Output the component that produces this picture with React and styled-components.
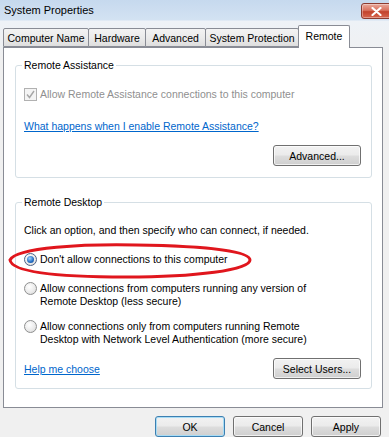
import React from 'react';
import styled, { createGlobalStyle } from 'styled-components';

const GlobalStyle = createGlobalStyle`
  html, body {
    margin: 0;
    padding: 0;
    background: #eef1f5;
  }
  body {
    font-family: "Liberation Sans", Arial, sans-serif;
    font-size: 10.5px;
    color: #000;
  }
`;

const Window = styled.div`
  position: relative;
  width: 389px;
  height: 437px;
  overflow: hidden;
  background: linear-gradient(180deg, #c6d9ee 0px, #d3e2f2 20px, #eef2f7 21px, #f0f0f0 60px);
`;

const TitleBar = styled.div`
  height: 21px;
  display: flex;
  align-items: flex-start;
  justify-content: space-between;
  padding-left: 4px;
  box-sizing: border-box;
`;

const Title = styled.span`
  font-size: 11px;
  line-height: 21px;
  color: #000;
`;

const CloseButton = styled.div`
  margin-top: 3px;
  margin-right: -6px;
  width: 32px;
  height: 14px;
  border: 1px solid #8c3b30;
  border-radius: 3px;
  background: linear-gradient(180deg, #e9a99c 0%, #d9725f 45%, #c2422c 55%, #d7664f 100%);
  display: flex;
  align-items: center;
  justify-content: center;
  box-shadow: inset 0 0 0 1px rgba(255, 255, 255, 0.35);
  svg {
    margin-left: -4px;
  }
`;

const Body = styled.div`
  padding: 0 6px 0 3px;
`;

const TabStrip = styled.div`
  height: 26px;
  display: flex;
  align-items: flex-end;
  position: relative;
  z-index: 1;
`;

const Tab = styled.div`
  box-sizing: border-box;
  width: ${p => p.$w}px;
  height: ${p => (p.$active ? 23 : 19)}px;
  margin-left: ${p => (p.$first ? 0 : -1)}px;
  margin-bottom: ${p => (p.$active ? -1 : 0)}px;
  border: 1px solid #898c95;
  border-bottom: ${p => (p.$active ? 'none' : '1px solid #898c95')};
  border-radius: 2px 2px 0 0;
  background: ${p => (p.$active ? '#fff' : 'linear-gradient(180deg, #f3f3f3 0%, #ebebeb 50%, #dedede 100%)')};
  display: flex;
  justify-content: center;
  padding-top: ${p => (p.$active ? 4 : 3)}px;
  font-size: 10.5px;
  line-height: 12px;
  white-space: nowrap;
`;

const Panel = styled.div`
  box-sizing: border-box;
  height: 361px;
  border: 1px solid #898c95;
  background: #fff;
  padding: 0 10px 0 11px;
  display: flex;
  flex-direction: column;
`;

const GroupBox = styled.fieldset`
  margin: ${p => p.$top}px 0 0 0;
  padding: 0 ${p => p.$padRight}px ${p => p.$padBottom}px 8px;
  border: 1px solid #d5dfe5;
  border-radius: 3px;
  min-width: 0;
  display: flex;
  flex-direction: column;
`;

const Legend = styled.legend`
  padding: 0 2px;
  margin-left: -2px;
  line-height: 12px;
  font-size: 10.5px;
  color: #000;
`;

const CheckRow = styled.div`
  margin-top: 16px;
  display: flex;
  align-items: center;
  gap: 3px;
  height: 14px;
  color: #8f8f8f;
`;

const CheckBox = styled.span`
  box-sizing: border-box;
  width: 13px;
  height: 13px;
  border: 1px solid #b1b1b1;
  background: #f4f4f4;
  display: flex;
  align-items: center;
  justify-content: center;
`;

const Link = styled.a`
  display: block;
  margin-top: ${p => p.$top || 0}px;
  color: #0066cc;
  text-decoration: underline;
  line-height: 14px;
  cursor: pointer;
`;

const Button = styled.button`
  box-sizing: border-box;
  width: ${p => p.$w || 70}px;
  height: 21px;
  padding: 0;
  font-family: "Liberation Sans", Arial, sans-serif;
  font-size: 10.5px;
  color: #000;
  border: 1px solid ${p => (p.$default ? '#3c7fb1' : '#707070')};
  border-radius: 3px;
  background: linear-gradient(180deg, #f2f2f2 0%, #ebebeb 48%, #dddddd 52%, #cfcfcf 100%);
  box-shadow: inset 0 0 0 1px ${p => (p.$default ? '#a8dcf5' : 'rgba(255,255,255,0.7)')};
`;

const ButtonRow = styled.div`
  margin-top: ${p => p.$top}px;
  display: flex;
  justify-content: ${p => p.$justify || 'flex-end'};
  align-items: center;
`;

const Intro = styled.div`
  margin-top: 15px;
  line-height: 14px;
`;

const RadioOption = styled.div`
  margin-top: ${p => p.$top}px;
  display: flex;
  align-items: flex-start;
  gap: 3px;
  line-height: 13px;
`;

const Radio = styled.span`
  box-sizing: border-box;
  flex: none;
  width: 13px;
  height: 13px;
  border-radius: 50%;
  border: 1px solid ${p => (p.$checked ? '#4d6185' : '#8e8f8f')};
  background: radial-gradient(circle at 40% 35%, #ffffff 0%, #e9e9e9 60%, #cfcfcf 100%);
  display: flex;
  align-items: center;
  justify-content: center;
  &::after {
    content: '';
    display: ${p => (p.$checked ? 'block' : 'none')};
    width: 7px;
    height: 7px;
    border-radius: 50%;
    background: radial-gradient(circle at 40% 35%, #9fd4ff 0%, #2a73c8 55%, #0d3f86 100%);
  }
`;

const Footer = styled.div`
  margin-top: 8px;
  display: flex;
  justify-content: flex-end;
  gap: 8px;
  padding-right: 2px;
`;

const Annotation = styled.svg`
  position: absolute;
  left: 6px;
  top: 241px;
  pointer-events: none;
`;

const tabs = [
  { label: 'Computer Name', w: 86 },
  { label: 'Hardware', w: 58 },
  { label: 'Advanced', w: 61 },
  { label: 'System Protection', w: 94 },
  { label: 'Remote', w: 52, active: true },
];

export default function App() {
  return (
    <>
      <GlobalStyle />
      <Window>
        <TitleBar>
          <Title>System Properties</Title>
          <CloseButton>
            <svg width="11" height="9" viewBox="0 0 11 9">
              <path d="M1.5 1 L9.5 8 M9.5 1 L1.5 8" stroke="#fff" strokeWidth="2.2" strokeLinecap="round" />
            </svg>
          </CloseButton>
        </TitleBar>
        <Body>
          <TabStrip>
            {tabs.map((t, i) => (
              <Tab key={t.label} $w={t.w} $active={t.active} $first={i === 0}>
                {t.label}
              </Tab>
            ))}
          </TabStrip>
          <Panel>
            <GroupBox $top={11} $padRight={10} $padBottom={11}>
              <Legend>Remote Assistance</Legend>
              <CheckRow>
                <CheckBox>
                  <svg width="9" height="9" viewBox="0 0 9 9">
                    <path d="M1 4.5 L3.5 7.5 L8 1" fill="none" stroke="#a6a6a6" strokeWidth="1.4" />
                  </svg>
                </CheckBox>
                Allow Remote Assistance connections to this computer
              </CheckRow>
              <Link $top={18}>What happens when I enable Remote Assistance?</Link>
              <ButtonRow $top={12}>
                <Button $w={88}>Advanced...</Button>
              </ButtonRow>
            </GroupBox>

            <GroupBox $top={18} $padRight={10} $padBottom={9}>
              <Legend>Remote Desktop</Legend>
              <Intro>Click an option, and then specify who can connect, if needed.</Intro>
              <RadioOption $top={16}>
                <Radio $checked />
                <span>Don't allow connections to this computer</span>
              </RadioOption>
              <RadioOption $top={16}>
                <Radio />
                <span>
                  Allow connections from computers running any version of
                  <br />
                  Remote Desktop (less secure)
                </span>
              </RadioOption>
              <RadioOption $top={12}>
                <Radio />
                <span>
                  Allow connections only from computers running Remote
                  <br />
                  Desktop with Network Level Authentication (more secure)
                </span>
              </RadioOption>
              <ButtonRow $top={12} $justify="space-between">
                <Link>Help me choose</Link>
                <Button $w={88}>Select Users...</Button>
              </ButtonRow>
            </GroupBox>
          </Panel>
          <Footer>
            <Button $default>OK</Button>
            <Button>Cancel</Button>
            <Button>Apply</Button>
          </Footer>
        </Body>
        <Annotation width="250" height="40" viewBox="0 0 250 40">
          <path
            d="M4 19 C 10 6, 80 3, 130 4 C 200 5, 244 10, 244 19 C 244 29, 190 36, 120 36 C 50 36, 6 31, 4 19 Z"
            fill="none"
            stroke="#e0161d"
            strokeWidth="3"
          />
        </Annotation>
      </Window>
    </>
  );
}
